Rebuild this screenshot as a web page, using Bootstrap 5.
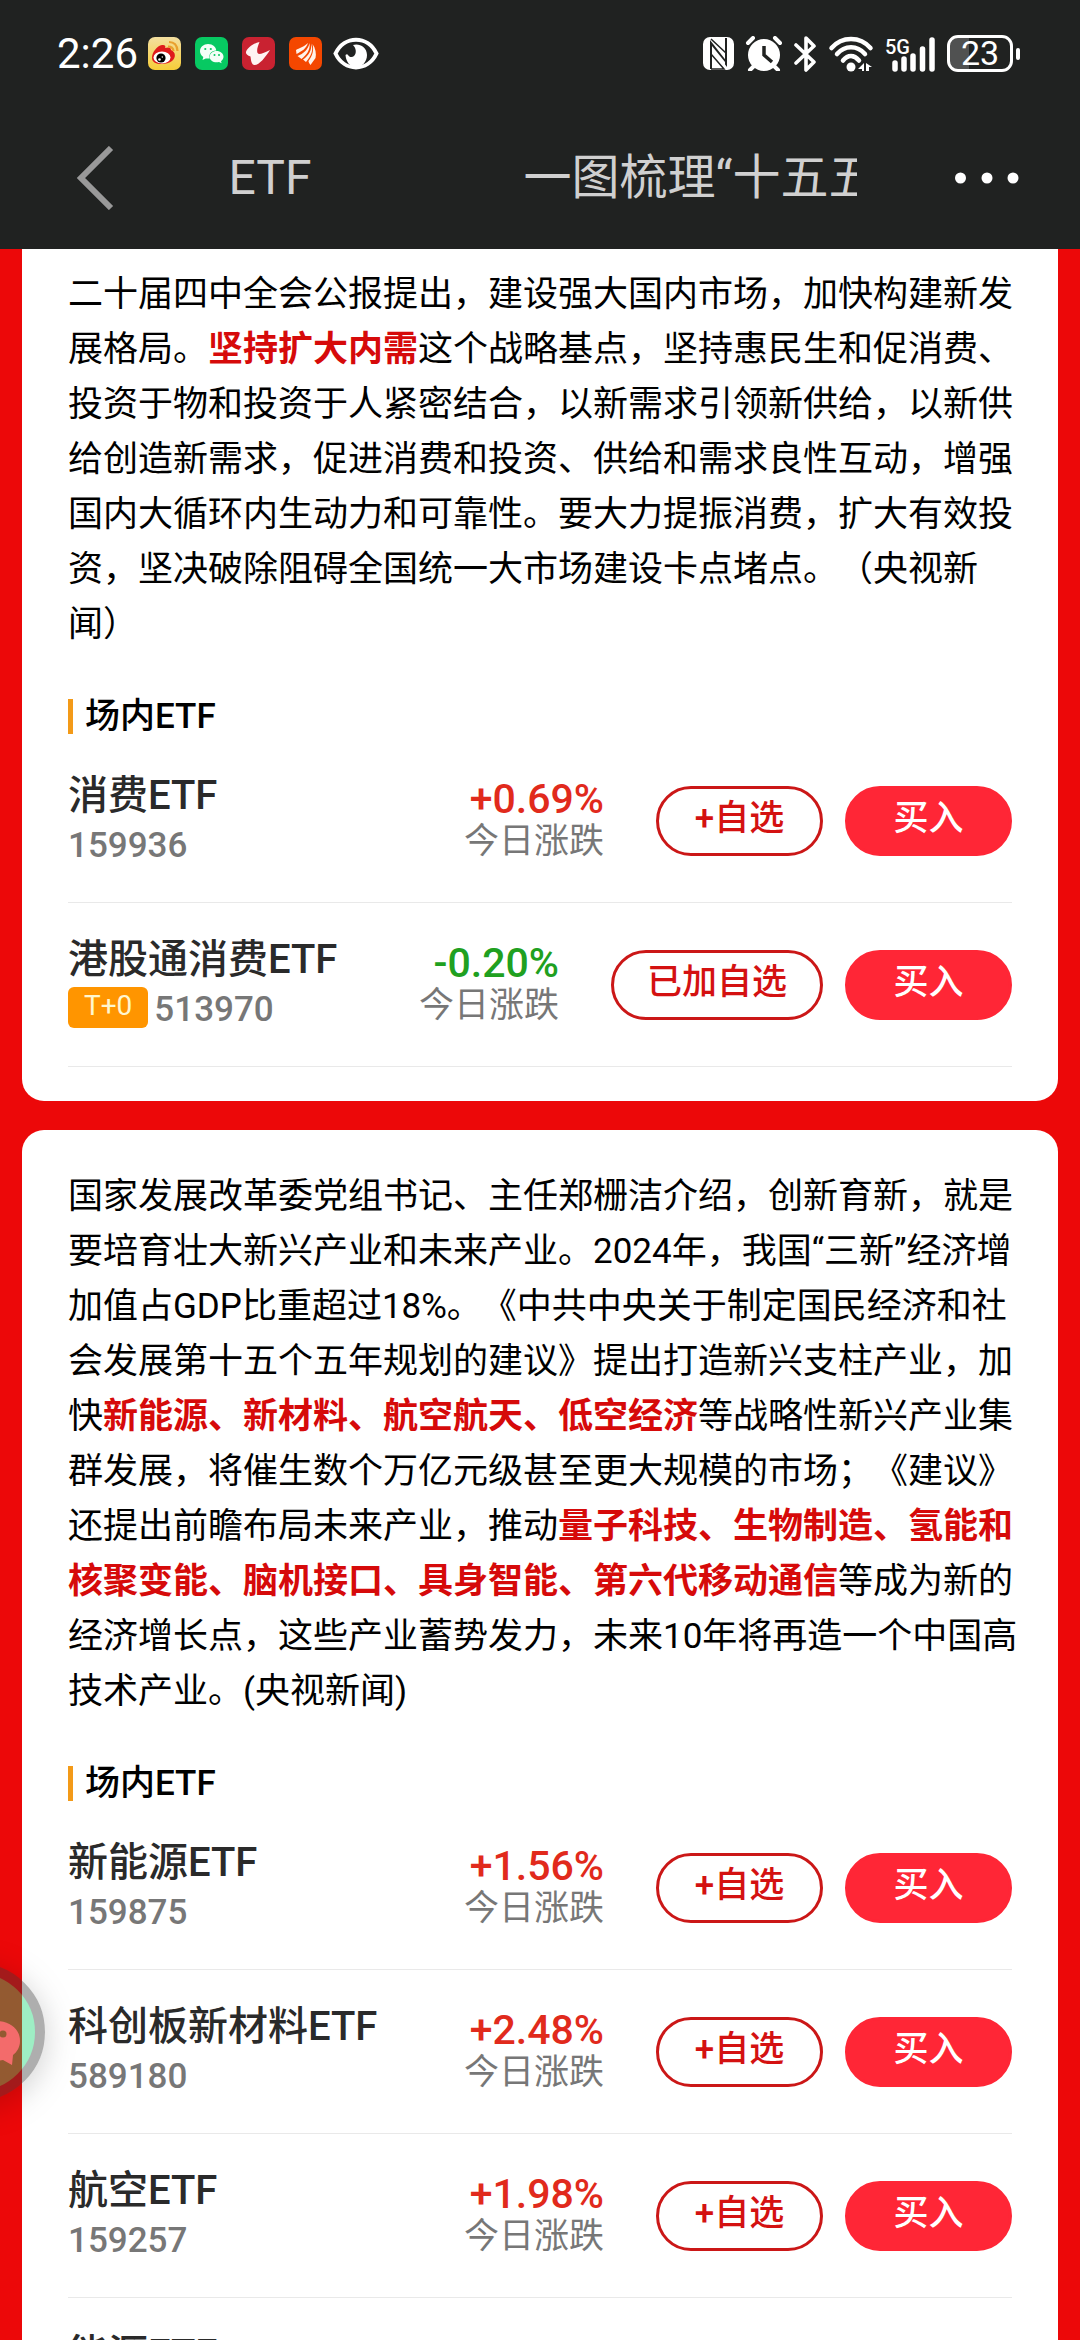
<!DOCTYPE html>
<html lang="zh-CN">
<head>
<meta charset="utf-8">
<meta name="viewport" content="width=device-width, initial-scale=1">
<title>ETF</title>
<link href="https://cdn.jsdelivr.net/npm/bootstrap@5.3.0/dist/css/bootstrap.min.css" rel="stylesheet">
<style>
  body { font-family: Roboto, "Noto Sans CJK SC", sans-serif; font-size: 35px; line-height: 55px; color: #000; background: #ec0809; text-spacing-trim: space-all; }
  svg { display: block; flex: none; }
  .topbar { background: #202221; }
  .statusbar { height: 107px; padding: 0 60px 0 57px; color: #fff; }
  .clock { font-size: 42px; line-height: 42px; }
  .apps { gap: 14px; margin-left: 10px; }
  .eye { margin-left: -3px; }
  .battery { width: 66px; height: 37px; margin-left: 10px; border: 3px solid #fff; border-radius: 11px; font-size: 34px; line-height: 31px; background: linear-gradient(90deg, #505151 19px, transparent 19px); }
  .battery-tip { width: 4px; height: 12px; border-radius: 2px; background: #fff; margin-left: 3px; }
  .titlebar { height: 142px; padding: 0 60px 0 76px; color: #d0d0d0; font-size: 48px; line-height: 60px; }
  .tab-first { width: 312px; padding: 0; color: inherit; text-decoration: none; }
  .tab-title { width: 333px; }
  .feed { padding: 0 22px; gap: 29px; }
  .panel { border: 0; border-radius: 22px; padding: 39px 46px 34px; flex: none; color: #000; }
  .panel-cut { border-top-left-radius: 0; border-top-right-radius: 0; padding-top: 18px; }
  .news { margin: 0 -14px 47px 0; }
  .news strong { color: #d60a0a; font-weight: 700; }
  .section-title { font-size: 35px; line-height: 35px; font-weight: 500; margin: 0 0 5px; padding-left: 12px; border-left: 5px solid #f39a18; }
  .fund { height: 164px; border-bottom: 1px solid #e9e9e9; }
  .fund-name { font-size: 40px; line-height: 50px; font-weight: 500; color: #2a2a2a; margin: 0; }
  .fund-code { font-size: 35px; line-height: 50px; color: #777; font-weight: 500; gap: 6px; }
  .tzero { font-size: 28px; line-height: 37px; padding: 0 16px 4px; margin-bottom: 4px; border-radius: 6px; background: #ff9500; color: #fff7d0; font-weight: 400; }
  .change { margin-right: 52px; text-align: right; }
  .pct { font-size: 41px; line-height: 42px; font-weight: 500; color: #e12a1c; }
  .pct-down { color: #20a020; }
  .pct-label { font-size: 35px; line-height: 44px; color: #777; }
  .pill { min-width: 167px; height: 70px; padding: 0 33px 4px; border-width: 3px; font-size: 35px; line-height: 60px; font-weight: 500; }
  .pill-watch, .pill-watch:hover { border-color: #cb1717; color: #d41111; background: #fff; }
  .pill-buy, .pill-buy:hover { border-color: #ff2636; background: #ff2636; color: #fff; margin-left: 22px; }
  .floater { position: absolute; left: -93px; top: 1963px; width: 138px; height: 138px; opacity: .4; border-radius: 50%; box-shadow: 0 6px 26px 4px rgba(0,0,0,.35); }
</style>
<script src="https://cdn.jsdelivr.net/npm/bootstrap@5.3.0/dist/js/bootstrap.bundle.min.js"></script>
</head>
<body class="vh-100 d-flex flex-column overflow-hidden position-relative">

<header class="topbar flex-shrink-0">
  <div class="statusbar d-flex align-items-center">
    <span class="clock">2:26</span>
    <div class="apps d-flex align-items-center">
      <svg width="33" height="33" viewBox="0 0 33 33"><defs><linearGradient id="wb" x2="0" y2="1"><stop stop-color="#f3dfa0"/><stop offset="1" stop-color="#f7cd38"/></linearGradient></defs><rect width="33" height="33" rx="7" fill="url(#wb)"/><path d="M4 21C4 15 9 9 14 8c3-.5 4 1 3 3 3-1 6-1 6 2 5 2 5 8 1 11-5 4-20 5-20-3z" fill="#df1a1c"/><ellipse cx="14" cy="20.500" rx="8.500" ry="6" fill="#fff"/><circle cx="13" cy="21" r="4.600" fill="#000"/><circle cx="11.500" cy="22.500" r="1.300" fill="#fff"/><circle cx="14.300" cy="20" r=".7" fill="#fff"/><path d="M21 5q8 0 8.500 9M20 9.500q5 0 5.500 4.500" fill="none" stroke="#e9a02e" stroke-width="2.200"/></svg>
      <svg width="33" height="33" viewBox="0 0 33 33"><rect width="33" height="33" rx="7" fill="#07c962"/><path d="M13 7c5 0 8 3 8.300 6.500-5 0-8 4-6.500 8h-4L7.500 23l.8-3C6 18.500 5 16.500 5 14.300 5 10 8.800 7 13 7z" fill="#f4fff8"/><path d="M21.500 14c4 0 7 2.500 7 5.800 0 1.900-1 3.400-2.500 4.400l.6 2-2.600-1.200c-5 1.200-9.300-1.500-9.300-5.300 0-3.200 3-5.700 6.800-5.700z" fill="#f4fff8"/><g fill="#07c962"><circle cx="10.300" cy="12" r="1.100"/><circle cx="15.800" cy="12" r="1.100"/><circle cx="19.500" cy="18" r="1"/><circle cx="24" cy="18" r="1"/></g></svg>
      <svg width="33" height="33" viewBox="0 0 33 33"><rect width="33" height="33" rx="7" fill="#c92231"/><path d="M17.500 5C12 6 5 11 4 15c-.3 2 1.500 3.500 4.500 4.500.5 4 1 8.500 4 8.500 5 0 11-8 15.500-15-4 2-8.500 4-11 4-3-1-2-6 .5-12z" fill="#fff3f3"/></svg>
      <svg width="33" height="33" viewBox="0 0 33 33"><rect width="33" height="33" rx="7" fill="#f44700"/><g fill="#fff2ea"><path d="M19 6c-4 4-9 5-12 7l.5 4C13 14 17 12 19 6z"/><path d="M20.500 6c-1 6-6 11-12 13l4 3c5-4 9-9 8-16z"/><path d="M22 6.500c1.500 6-3 13-8 16l3 2.500c5-6 8-12 5-18.500z"/><path d="M23.500 7c3 4 4 10 3 14l-5 7c-1-1.500-2-2.500-2-4 4-5 5.500-11 4-17z"/></g></svg>
      <svg class="eye" width="46" height="33" viewBox="0 0 46 33"><path d="M2.500 16.500C11-2 35-2 43.500 16.500 35 35 11 35 2.500 16.500z" fill="none" stroke="#fff" stroke-width="4"/><path d="M20 8c6-2 14 2 14 10 0 7-5 12-11 12s-10-5-10.500-12c1-1 2-1 2.500 0 1 2 4 3 6 1 3-3 2-8-1-11z" fill="#fff"/></svg>
    </div>
    <div class="d-flex align-items-center ms-auto">
      <svg width="31" height="33" viewBox="0 0 31 33"><rect width="31" height="33" rx="7" fill="#fff"/><path d="M8 32V6l15 19M23 1v26L8 8" fill="none" stroke="#202221" stroke-width="2"/><path d="M8 2l15 14V1M8 17l13 15H8" fill="none" stroke="#202221" stroke-width="1.500"/><path d="M9 9l13 16v5L9 14z" fill="#fff"/></svg>
      <svg class="ms-2 me-2" width="44" height="35" viewBox="-4 0 44 35"><circle cx="18" cy="19" r="16" fill="#fff"/><path d="M2 7l5-5M34 7l-5-5M8 30l-4 4M28 30l4 4" stroke="#fff" stroke-width="4" stroke-linecap="round"/><path d="M18 10v9l8 7" fill="none" stroke="#202221" stroke-width="3.500"/></svg>
      <svg width="23" height="36" viewBox="0 0 23 36"><path d="M2 9l18 17-8 8V2l8 8L2 27" fill="none" stroke="#fff" stroke-width="3.600" stroke-linejoin="round" stroke-linecap="round"/></svg>
      <svg class="ms-2" width="52" height="36" viewBox="-4 0 52 36"><g fill="none" stroke="#fff" stroke-width="4.500" stroke-linecap="round"><path d="M2.500 12C13 0 31 0 41.500 12M8 18C16 9 28 9 36 18M14 24.500c5-6 11-6 16 0"/></g><circle cx="22" cy="31" r="4.500" fill="#fff"/><path d="M29 33l6-6v8h-2v-2zM37 27l6 4h-3v4h-3z" fill="#fff"/></svg>
      <svg class="ms-2" width="52" height="36" viewBox="0 0 52 36"><text x="0" y="18" fill="#fff" font-family="Roboto" font-weight="500" font-size="20">5G</text><path d="M10 33v-6M19 33v-10M28 33V20M37.500 33V13M47 33V4" stroke="#fff" stroke-width="5.500" stroke-linecap="round"/></svg>
      <span class="battery d-flex justify-content-center align-items-center">23</span><span class="battery-tip"></span>
    </div>
  </div>
  <nav class="titlebar d-flex align-items-center">
    <button class="btn p-0 border-0" type="button" aria-label="返回"><svg width="38" height="64" viewBox="0 0 38 64"><path d="M35 2L5 32l30 30" fill="none" stroke="#999" stroke-width="6"/></svg></button>
    <a class="tab-first text-center flex-shrink-0" href="#">ETF</a>
    <span class="tab-title text-nowrap overflow-hidden ms-auto me-auto">一图梳理“十五五”</span>
    <button class="btn p-0 border-0" type="button" aria-label="更多"><svg width="66" height="12" viewBox="0 0 66 12" fill="#fff"><circle cx="6.500" cy="6" r="5.500"/><circle cx="33" cy="6" r="5.500"/><circle cx="59" cy="6" r="5.500"/></svg></button>
  </nav>
</header>

<main class="feed d-flex flex-column flex-grow-1 overflow-hidden">
  <section class="card panel panel-cut">
    <p class="news">二十届四中全会公报提出，建设强大国内市场，加快构建新发展格局。<strong>坚持扩大内需</strong>这个战略基点，坚持惠民生和促消费、投资于物和投资于人紧密结合，以新需求引领新供给，以新供给创造新需求，促进消费和投资、供给和需求良性互动，增强国内大循环内生动力和可靠性。要大力提振消费，扩大有效投资，坚决破除阻碍全国统一大市场建设卡点堵点。（央视新闻）</p>
    <h2 class="section-title">场内ETF</h2>
    <div class="fund d-flex align-items-center">
      <div class="me-auto"><h3 class="fund-name">消费ETF</h3><div class="fund-code">159936</div></div>
      <div class="change"><div class="pct">+0.69%</div><div class="pct-label">今日涨跌</div></div>
      <button class="btn rounded-pill pill pill-watch" type="button">+自选</button>
      <button class="btn rounded-pill pill pill-buy" type="button">买入</button>
    </div>
    <div class="fund d-flex align-items-center">
      <div class="me-auto"><h3 class="fund-name">港股通消费ETF</h3><div class="fund-code d-flex align-items-center"><span class="tzero">T+0</span>513970</div></div>
      <div class="change"><div class="pct pct-down">-0.20%</div><div class="pct-label">今日涨跌</div></div>
      <button class="btn rounded-pill pill pill-watch" type="button">已加自选</button>
      <button class="btn rounded-pill pill pill-buy" type="button">买入</button>
    </div>
  </section>

  <section class="card panel">
    <p class="news">国家发展改革委党组书记、主任郑栅洁介绍，创新育新，就是要培育壮大新兴产业和未来产业。2024年，我国“三新”经济增加值占GDP比重超过18%。《中共中央关于制定国民经济和社会发展第十五个五年规划的建议》提出打造新兴支柱产业，加快<strong>新能源、新材料、航空航天、低空经济</strong>等战略性新兴产业集群发展，将催生数个万亿元级甚至更大规模的市场；《建议》还提出前瞻布局未来产业，推动<strong>量子科技、生物制造、氢能和核聚变能、脑机接口、具身智能、第六代移动通信</strong>等成为新的经济增长点，这些产业蓄势发力，未来10年将再造一个中国高技术产业。(央视新闻)</p>
    <h2 class="section-title">场内ETF</h2>
    <div class="fund d-flex align-items-center">
      <div class="me-auto"><h3 class="fund-name">新能源ETF</h3><div class="fund-code">159875</div></div>
      <div class="change"><div class="pct">+1.56%</div><div class="pct-label">今日涨跌</div></div>
      <button class="btn rounded-pill pill pill-watch" type="button">+自选</button>
      <button class="btn rounded-pill pill pill-buy" type="button">买入</button>
    </div>
    <div class="fund d-flex align-items-center">
      <div class="me-auto"><h3 class="fund-name">科创板新材料ETF</h3><div class="fund-code">589180</div></div>
      <div class="change"><div class="pct">+2.48%</div><div class="pct-label">今日涨跌</div></div>
      <button class="btn rounded-pill pill pill-watch" type="button">+自选</button>
      <button class="btn rounded-pill pill pill-buy" type="button">买入</button>
    </div>
    <div class="fund d-flex align-items-center">
      <div class="me-auto"><h3 class="fund-name">航空ETF</h3><div class="fund-code">159257</div></div>
      <div class="change"><div class="pct">+1.98%</div><div class="pct-label">今日涨跌</div></div>
      <button class="btn rounded-pill pill pill-watch" type="button">+自选</button>
      <button class="btn rounded-pill pill pill-buy" type="button">买入</button>
    </div>
    <div class="fund d-flex align-items-center">
      <div class="me-auto"><h3 class="fund-name">能源ETF</h3><div class="fund-code">&nbsp;</div></div>
    </div>
  </section>
</main>

<a class="floater" href="#" aria-label="微信">
  <svg width="138" height="138" viewBox="0 0 138 138"><circle cx="69" cy="69" r="64" fill="#0fd56e" stroke="#373737" stroke-width="10"/><path d="M90 58c14 0 23 9 23 20 0 6-3 11-7 14l-1 10-9-5c-16 4-29-6-29-19 0-11 9-20 23-20z" fill="#fff"/><circle cx="96" cy="71" r="3.500" fill="#0fd56e"/></svg>
</a>
</body>
</html>
